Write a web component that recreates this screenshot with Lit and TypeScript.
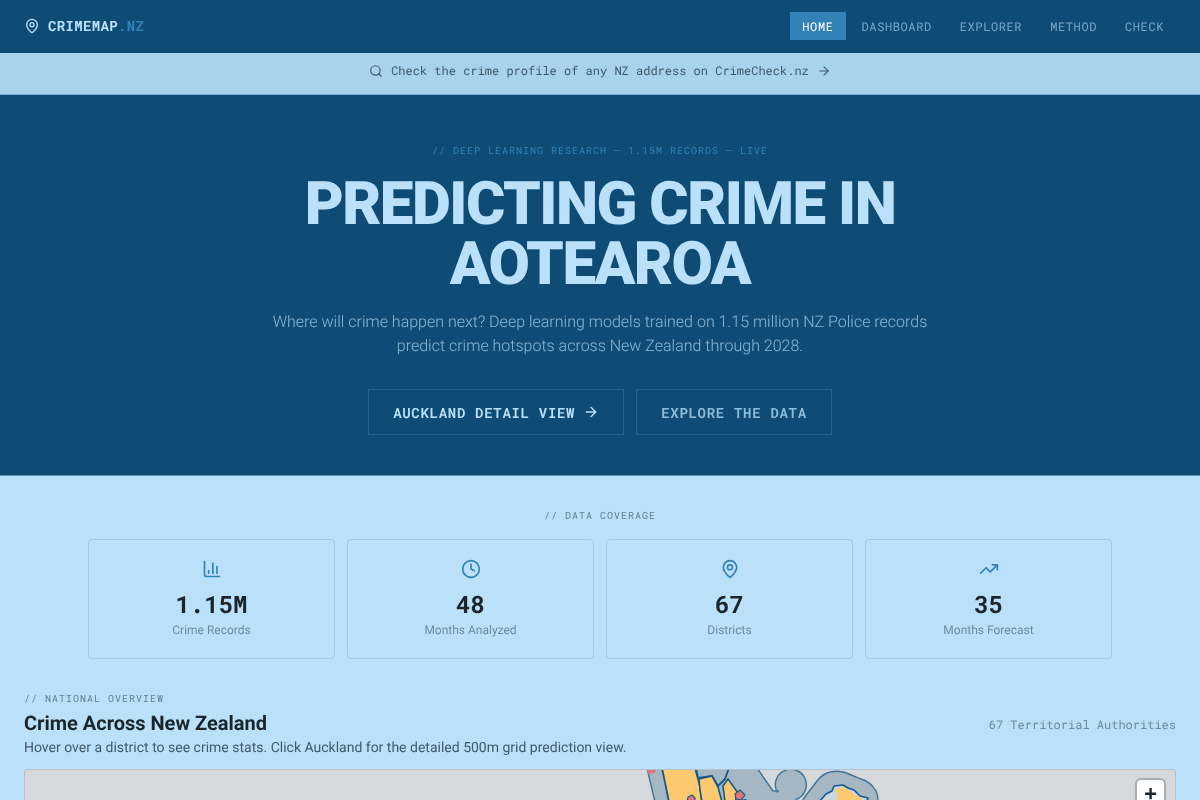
import { LitElement, html, css, svg } from "lit";
import { customElement } from "lit/decorators.js";

const stroke = (paths: unknown, size: number, cls = "") => html`<svg class=${cls} width=${size} height=${size} viewBox="0 0 24 24" fill="none" stroke="currentColor" stroke-width="2" stroke-linecap="round" stroke-linejoin="round">${paths}</svg>`;
const pin = svg`<path d="M20 10c0 4.993-5.539 10.193-7.399 11.799a1 1 0 0 1-1.202 0C9.539 20.193 4 14.993 4 10a8 8 0 0 1 16 0"/><circle cx="12" cy="10" r="3"/>`;
const arrow = svg`<path d="M5 12h14"/><path d="m12 5 7 7-7 7"/>`;
const search = svg`<path d="m21 21-4.34-4.34"/><circle cx="11" cy="11" r="8"/>`;
const chart = svg`<path d="M3 3v16a2 2 0 0 0 2 2h16"/><path d="M18 17V9"/><path d="M13 17V5"/><path d="M8 17v-3"/>`;
const clock = svg`<circle cx="12" cy="12" r="10"/><polyline points="12 6 12 12 16 14"/>`;
const trend = svg`<polyline points="22 7 13.5 15.5 8.5 10.5 2 17"/><polyline points="16 7 22 7 22 13"/>`;

const mapArt = svg`<svg class="art" width="1150" height="500" viewBox="25 770 1150 500" stroke-linejoin="round">
  <path d="M647 768L651 785L655 802H672L664 768Z" fill="#a6b7c4" stroke="#3f7497" stroke-width="1.4"/>
  <path d="M700 768H757L773 791L785 791L797 799L791 803H700Z" fill="#a6b7c4"/>
  <circle cx="791" cy="785" r="15.5" fill="#a6b7c4"/>
  <g fill="none" stroke="#3f7497" stroke-width="1.4">
    <path d="M757 768L773 791L779 791"/>
    <path d="M777.5 792.7A15.5 15.5 0 1 1 797 799L791 803"/>
  </g>
  <path d="M801 803C805 796 810 790 814 785C818 779 822 775 827 773C832 771 838 771 843 772C850 774 856 777 861 779C868 781 873 786 876 791C878 795 878 799 878 803Z" fill="#a6b7c4" stroke="#3f7497" stroke-width="1.4"/>
  <path d="M647 768H656L655 773L648 774Z" fill="#e0737a"/>
  <path d="M662 768H695L700 786L702 802H669Z" fill="#fdc96e" stroke="#155a8a" stroke-width="1.8"/>
  <path d="M696 768H729L725 779L718 786L712 776L698 778Z" fill="#a6b7c4" stroke="#155a8a" stroke-width="1.8"/>
  <path d="M699 779L712 776L718 787L722 802H702L700 790Z" fill="#fdc96e" stroke="#155a8a" stroke-width="1.6"/>
  <path d="M723 786L728 779L733 786L738 793L735 802H725Z" fill="#fdc96e" stroke="#155a8a" stroke-width="1.6"/>
  <path d="M735 794L740 790L745 795L741 800L736 799Z" fill="#e0737a" stroke="#155a8a" stroke-width="1.2"/>
  <path d="M688 797L692 795L695 798L695 803H687Z" fill="#e0737a" stroke="#155a8a" stroke-width="1.2"/>
  <path d="M738 800L746 799L750 804H735Z" fill="#155a8a"/>
  <path d="M818 803L826 794L832 791L834 786L843 785L848 788L854 790L860 796L868 798L866 803Z" fill="#c9d7e0" stroke="#155a8a" stroke-width="1.6"/>
  <path d="M835 789L844 787L850 791L855 795L862 798L862 803H836L838 796Z" fill="#fdc96e"/>
</svg>`;

@customElement("app-root")
export class AppRoot extends LitElement {
  static styles = css`
    :host { display: block; background: #bbe1fa; color: #1b262c; font-family: Roboto, "Liberation Sans", sans-serif; text-rendering: geometricPrecision; }
    .page { will-change: transform; }
    nav, .banner, .eyebrow, .btn, .value, .count { font-family: "Roboto Mono", "Liberation Mono", monospace; }
    nav { display: flex; align-items: center; justify-content: space-between; height: 52px; padding: 0 24px; background: #0f4c75; border-bottom: 1px solid #0d4469; }
    .logo { display: flex; align-items: center; gap: 8px; color: #bbe1fa; font-size: 14px; font-weight: 700; letter-spacing: 0.35px; }
    .logo > span { padding-bottom: 1px; }
    .logo span span { color: #3282b8; }
    .links { display: flex; gap: 4px; }
    .links a { padding: 7px 12px 5px; font-size: 12px; line-height: 16px; letter-spacing: 0.6px; color: rgba(187,225,250,0.6); }
    .links a.active { background: #3282b8; color: #fff; }
    .banner { display: flex; align-items: center; justify-content: center; gap: 8px; height: 42px; box-sizing: border-box; padding-bottom: 5px; background: #a9d2ed; border-bottom: 1px solid #7fb0d2; font-size: 12px; color: #3f5a6c; }
    .hero { display: flex; flex-direction: column; align-items: center; height: 381px; box-sizing: border-box; padding-top: 48px; background: #0f4c75; border-bottom: 1px solid #5d93ba; text-align: center; }
    .eyebrow { font-size: 10px; line-height: 15px; letter-spacing: 1px; }
    .hero .eyebrow { color: #3282b8; }
    h1 { margin: 16px 0 0; font-size: 60px; line-height: 60px; font-weight: 900; letter-spacing: -1.5px; color: #bbe1fa; width: 720px; }
    .lead { margin: 16px 0 0; width: 672px; font-size: 16px; line-height: 24px; font-weight: 300; color: rgba(187,225,250,0.7); }
    .actions { display: flex; gap: 12px; margin-top: 31px; }
    .btn { display: flex; align-items: center; gap: 8px; height: 46px; box-sizing: border-box; padding: 0 24px; border: 1px solid rgba(187,225,250,0.15); font-size: 14px; font-weight: 600; letter-spacing: 0.7px; color: #bbe1fa; }
    .btn.second { color: rgba(187,225,250,0.75); }
    .coverage { display: flex; flex-direction: column; align-items: center; padding-top: 32px; }
    .coverage .eyebrow, .overview .eyebrow { color: #5f7f95; }
    .stats { display: grid; grid-template-columns: repeat(4, 247px); gap: 12px; margin-top: 16px; }
    .stat { display: flex; flex-direction: column; align-items: center; height: 120px; box-sizing: border-box; padding-top: 19px; border: 1px solid rgba(15,76,117,0.15); border-radius: 4px; }
    .stat svg { color: #3282b8; }
    .value { margin-top: 9px; font-size: 24px; line-height: 32px; font-weight: 700; }
    .label { margin-top: 2px; font-size: 12px; line-height: 16px; color: #6b8aa0; }
    .overview { padding: 32px 24px 0; }
    .head { display: flex; justify-content: space-between; align-items: flex-end; }
    h2 { margin: 3px 0 0; font-size: 20px; line-height: 28px; font-weight: 700; }
    .sub { margin: 1px 0 0; font-size: 14px; line-height: 20px; color: #3f5a6c; }
    .count { font-size: 12px; line-height: 16px; color: #6b8aa0; margin-bottom: 25px; }
    .map { position: relative; margin-top: 11px; height: 500px; background: #d5d9dc; border: 1px solid rgba(15,76,117,0.15); border-radius: 4px; overflow: hidden; }
    .art { position: absolute; left: 0; top: 0; }
    .zoom { position: absolute; top: 10px; right: 11px; width: 27px; height: 60px; background: #fff; border-radius: 4px; outline: 2px solid rgba(0,0,0,0.2); font: 700 22px/32px "Liberation Mono", monospace; text-align: center; color: #1b262c; }
  `;

  render() {
    const stats = [[chart, "1.15M", "Crime Records"], [clock, "48", "Months Analyzed"], [pin, "67", "Districts"], [trend, "35", "Months Forecast"]] as const;
    return html`
      <div class="page">
      <nav>
        <div class="logo">${stroke(pin, 16)}<span>CRIMEMAP<span>.NZ</span></span></div>
        <div class="links">
          <a class="active">HOME</a><a>DASHBOARD</a><a>EXPLORER</a><a>METHOD</a><a>CHECK</a>
        </div>
      </nav>
      <div class="banner">${stroke(search, 14)}<span>Check the crime profile of any NZ address on CrimeCheck.nz</span>${stroke(arrow, 14)}</div>
      <section class="hero">
        <div class="eyebrow">// DEEP LEARNING RESEARCH — 1.15M RECORDS — LIVE</div>
        <h1>PREDICTING CRIME IN AOTEAROA</h1>
        <p class="lead">Where will crime happen next? Deep learning models trained on 1.15 million NZ Police records predict crime hotspots across New Zealand through 2028.</p>
        <div class="actions">
          <div class="btn">AUCKLAND DETAIL VIEW ${stroke(arrow, 16)}</div>
          <div class="btn second">EXPLORE THE DATA</div>
        </div>
      </section>
      <section class="coverage">
        <div class="eyebrow">// DATA COVERAGE</div>
        <div class="stats">
          ${stats.map(([icon, value, label]) => html`<div class="stat">${stroke(icon, 20)}<div class="value">${value}</div><div class="label">${label}</div></div>`)}
        </div>
      </section>
      <section class="overview">
        <div class="head">
          <div>
            <div class="eyebrow">// NATIONAL OVERVIEW</div>
            <h2>Crime Across New Zealand</h2>
            <p class="sub">Hover over a district to see crime stats. Click Auckland for the detailed 500m grid prediction view.</p>
          </div>
          <div class="count">67 Territorial Authorities</div>
        </div>
        <div class="map">
          ${mapArt}
          <div class="zoom">+</div>
        </div>
      </section>
      </div>
    `;
  }
}
